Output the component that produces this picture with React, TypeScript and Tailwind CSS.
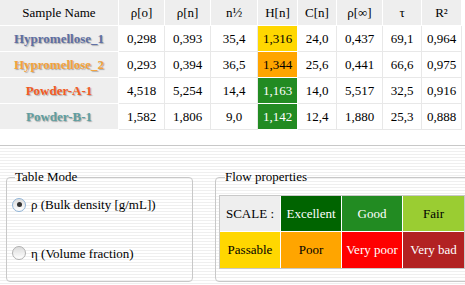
import React from 'react'

const widths = [119, 46, 46, 47, 40, 39, 46, 39, 40]
const headers = ['Sample Name', 'ρ[o]', 'ρ[n]', 'n½', 'H[n]', 'C[n]', 'ρ[∞]', 'τ', 'R²']

type Row = { name: string; color: string; h: string; values: string[] }

const rows: Row[] = [
  { name: 'Hypromellose_1', color: 'text-[#5d6ea3]', h: 'bg-[#ffd700] text-black', values: ['0,298', '0,393', '35,4', '1,316', '24,0', '0,437', '69,1', '0,964'] },
  { name: 'Hypromellose_2', color: 'text-[#f2a23c]', h: 'bg-[#ffa500] text-black', values: ['0,293', '0,394', '36,5', '1,344', '25,6', '0,441', '66,6', '0,975'] },
  { name: 'Powder-A-1', color: 'text-[#f25a24]', h: 'bg-[#228b22] text-white', values: ['4,518', '5,254', '14,4', '1,163', '14,0', '5,517', '32,5', '0,916'] },
  { name: 'Powder-B-1', color: 'text-[#5f9ea0]', h: 'bg-[#228b22] text-white', values: ['1,582', '1,806', '9,0', '1,142', '12,4', '1,880', '25,3', '0,888'] },
]

const scale = [
  [
    { label: 'SCALE :', cls: 'bg-[#eeeeee] text-black' },
    { label: 'Excellent', cls: 'bg-[#006400] text-white' },
    { label: 'Good', cls: 'bg-[#228b22] text-white' },
    { label: 'Fair', cls: 'bg-[#9acd32] text-black' },
  ],
  [
    { label: 'Passable', cls: 'bg-[#ffd700] text-black' },
    { label: 'Poor', cls: 'bg-[#ffa500] text-black' },
    { label: 'Very poor', cls: 'bg-[#ff0000] text-white' },
    { label: 'Very bad', cls: 'bg-[#b22222] text-white' },
  ],
]

function Radio({ checked, label }: { checked?: boolean; label: string }) {
  return (
    <label className="flex items-center gap-[5px]">
      <span
        className={
          'flex h-[14px] w-[14px] items-center justify-center rounded-full border bg-gradient-to-b from-[#dcdcdc] to-white ' +
          (checked ? 'border-[#8fb3d6]' : 'border-[#b0b0b0]')
        }
      >
        {checked && <span className="h-[5px] w-[5px] rounded-full bg-[#333]" />}
      </span>
      <span>{label}</span>
    </label>
  )
}

export default function App() {
  return (
    <div className="h-[285px] w-[465px] overflow-hidden bg-white [font-family:'Liberation_Serif','Times_New_Roman',serif] text-[13px] text-black">
      <table className="w-[462px] table-fixed border-separate border-spacing-0">
        <colgroup>
          {widths.map((w, i) => (
            <col key={i} style={{ width: w }} />
          ))}
        </colgroup>
        <thead>
          <tr className="h-[26px]">
            {headers.map((h, i) => (
              <th key={i} className="border-r border-b border-white bg-[#eeeeee] p-0 text-center font-normal">
                {h}
              </th>
            ))}
          </tr>
        </thead>
        <tbody>
          {rows.map((r) => (
            <tr key={r.name} className="h-[26px]">
              <td
                className={'border-r border-b border-white bg-[#eeeeee] p-0 text-center font-bold [text-shadow:1px_1px_1px_#aaa] ' + r.color}
              >
                {r.name}
              </td>
              {r.values.map((v, i) => (
                <td
                  key={i}
                  className={
                    'border-r border-b p-0 text-center ' +
                    (i === 3 ? 'border-white ' + r.h : 'border-[#e8e8e8]')
                  }
                >
                  {v}
                </td>
              ))}
            </tr>
          ))}
        </tbody>
      </table>

      <div className="mt-[15px] h-[200px] border-t border-[#c8c8c8] bg-[repeating-linear-gradient(to_bottom,#ffffff_0px,#ffffff_2px,#efefef_2px,#efefef_3px)] pt-[24px]">
        <div className="flex items-start">
          <fieldset className="ml-[6px] h-[112px] w-[187px] shrink-0 rounded-[4px] border border-[#c8c8c8] px-[5px]">
            <legend className="ml-[3px] px-0 leading-[14px]">Table Mode</legend>
            <div className="mt-[11px] flex flex-col gap-[29px]">
              <Radio checked label="ρ (Bulk density [g/mL])" />
              <Radio label="η (Volume fraction)" />
            </div>
          </fieldset>

          <fieldset className="ml-[22px] h-[112px] w-[262px] shrink-0 rounded-[4px] border border-[#c8c8c8] px-[3px]">
            <legend className="ml-[6px] px-0 leading-[14px]">Flow properties</legend>
            <table className="mt-[11px] w-[246px] table-fixed border-separate border-spacing-0 border border-[#c8c8c8]">
              <tbody>
                {scale.map((row, ri) => (
                  <tr key={ri} className="h-[36px]">
                    {row.map((c, ci) => (
                      <td
                        key={ci}
                        className={
                          'p-0 text-center ' +
                          (ci < 3 ? 'border-r border-white ' : '') +
                          (ri === 0 ? 'border-b border-white ' : '') +
                          c.cls
                        }
                      >
                        {c.label}
                      </td>
                    ))}
                  </tr>
                ))}
              </tbody>
            </table>
          </fieldset>
        </div>
      </div>
    </div>
  )
}
